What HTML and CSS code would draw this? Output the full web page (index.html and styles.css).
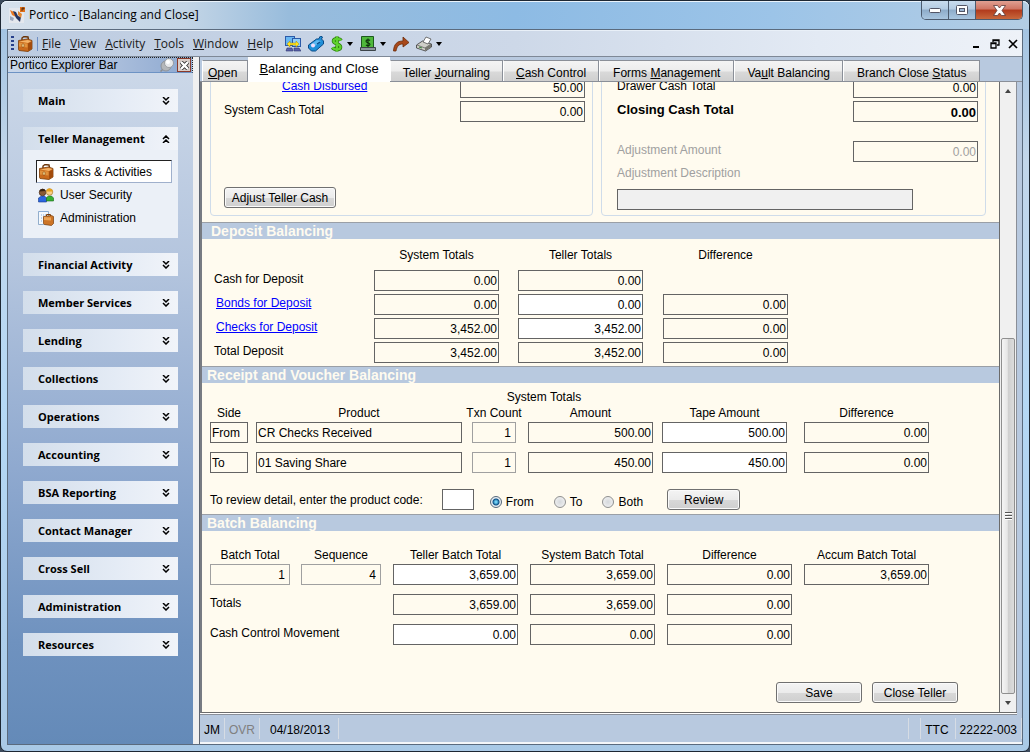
FILE: index.html
```html
<!DOCTYPE html>
<html lang="en">
  <head>
    <meta charset="UTF-8" />
    <meta name="viewport" content="width=device-width, initial-scale=1.0" />
    <title>Portico - [Balancing and Close]</title>
    <link rel="stylesheet" href="styles.css" />
  </head>
  <body>
    <!-- Shared icons -->
    <svg class="sprite" aria-hidden="true">
      <symbol id="briefcase" viewBox="0 0 16 16">
        <path d="M5 5l0-3 2-1.500 4 0.500 0.500 2.500" fill="none" stroke="#6b3408" stroke-width="1.400" />
        <path d="M1.500 4.500l9-1.500 4.500 1.500v8.500l-4 2.500-9-1-0.500-1z" fill="#c96a1c" stroke="#7a3c08" stroke-width="0.8" />
        <path d="M2 5.500l8.500-1.500 4 1-3.500 2z" fill="#f3b266" />
        <path d="M2 6.500l8.500 1v4l-8.500-1z" fill="#e2913c" />
        <path d="M11 7.500l4-2v7L11 15z" fill="#a34c0c" />
        <path d="M5 8h2v3H5z" fill="#ffe29a" stroke="#7a3c08" stroke-width="0.5" />
      </symbol>
      <symbol id="down" viewBox="0 0 8 8">
        <path d="M1 0l3 3 3-3M1 4l3 3 3-3" fill="none" stroke="#000" stroke-width="1.500" />
      </symbol>
      <symbol id="up" viewBox="0 0 8 8">
        <path d="M1 4l3-3 3 3M1 8l3-3 3 3" fill="none" stroke="#000" stroke-width="1.500" />
      </symbol>
      <symbol id="caret" viewBox="0 0 6 4">
        <path d="M0 0h6L3 4z" fill="#000" />
      </symbol>
    </svg>

    <div class="window">
      <header class="titlebar">
        <svg class="logo" viewBox="0 0 16 16" aria-hidden="true">
          <rect x="0" y="1" width="15" height="15" fill="#e4e8ee" />
          <path d="M1 3l4 2 2 5-4-2z" fill="#e87722" />
          <path d="M4 4l3 1 2 4 3 1-1 5-4-4z" fill="#26345e" />
          <path d="M9 4l4 3-1 4-3-3z" fill="#e58a34" />
          <path d="M1 9l4 2-1 3-3-1z" fill="#9aa6bd" />
          <rect x="11" y="0" width="5" height="5" fill="#e0701a" />
          <path d="M13 4V1h2v1h-2" fill="none" stroke="#4a2a10" stroke-width="0.8" />
        </svg>
        <h1>Portico - [Balancing and Close]</h1>
        <div class="window-buttons">
          <button class="minimize" aria-label="Minimize">
            <svg width="14" height="7" viewBox="0 0 14 7"><rect x="1.500" y="1.500" width="11" height="4" rx="1" fill="#fff" stroke="#535666" /></svg>
          </button>
          <button class="maximize" aria-label="Maximize">
            <svg width="12" height="10" viewBox="0 0 12 10"><rect x="0.500" y="0.500" width="11" height="9" rx="1" fill="#fff" stroke="#535666" /><rect x="3.500" y="3.500" width="5" height="3" fill="#9fb9d6" stroke="#535666" /></svg>
          </button>
          <button class="close" aria-label="Close">
            <svg width="13" height="11" viewBox="0 0 13 11"><path d="M0.500 0.500h4l2 2.500 2-2.500h4L9 5.500l3.500 5h-4l-2-2.500-2 2.500h-4L4 5.500z" fill="#fff" stroke="#5a3a3a" stroke-width="0.8" /></svg>
          </button>
        </div>
      </header>

      <div class="client">
        <nav class="menubar" aria-label="Menu">
          <span class="grip"></span>
          <svg class="tool" viewBox="0 0 16 16"><use href="#briefcase" /></svg>
          <span class="divider"></span>
          <a href="#"><u>F</u>ile</a>
          <a href="#"><u>V</u>iew</a>
          <a href="#"><u>A</u>ctivity</a>
          <a href="#"><u>T</u>ools</a>
          <a href="#"><u>W</u>indow</a>
          <a href="#"><u>H</u>elp</a>
          <div class="tools">
            <button class="tool-button" aria-label="Connections">
              <svg class="tool" viewBox="0 0 16 16">
                <rect x="0.500" y="0.500" width="9" height="9" fill="#69b7f2" stroke="#2b5aa8" />
                <rect x="7.500" y="2.500" width="8" height="8" fill="#8fcdf7" stroke="#2b5aa8" />
                <path d="M2 8l3-3v2h6V5l3 3-3 3V9H5v2z" fill="#ffe41f" stroke="#a88a00" stroke-width="0.5" />
                <path d="M2 12h5l1 3H1zM9 12h5l2 3H9z" fill="#5a62a8" stroke="#2e3570" stroke-width="0.6" />
              </svg>
            </button>
            <button class="tool-button" aria-label="Card">
              <svg class="tool" viewBox="0 0 16 16">
                <path d="M0.500 9l8-6 2 0 2-3 2 1-1 2 2 2v3l-8 7-4 0-3-3z" fill="#1f8fd8" stroke="#0b4a86" />
                <path d="M2 9l7-5 4 1-7 6z" fill="#5cb8f0" />
                <circle cx="5" cy="9.500" r="2" fill="#f0dcf8" />
                <path d="M9 8l3-2" stroke="#0b4a86" stroke-width="1.200" />
              </svg>
            </button>
            <button class="tool-button menu" aria-label="Dollar">
              <svg class="tool narrow" viewBox="0 0 12 16">
                <path d="M10 4.500C9 2.500 2.500 2 2.500 5s7 2.500 7 6S3 14 1.500 11.500M6 0.500v15" fill="none" stroke="#2c7a0c" stroke-width="3.600" />
                <path d="M10 4.500C9 2.500 2.500 2 2.500 5s7 2.500 7 6S3 14 1.500 11.500M6 0.500v15" fill="none" stroke="#5fd22c" stroke-width="2.200" />
              </svg>
              <svg class="caret" viewBox="0 0 6 4"><use href="#caret" /></svg>
            </button>
            <button class="tool-button menu" aria-label="Cash">
              <svg class="tool" viewBox="0 0 16 16">
                <path d="M1.500 0.500h12v11h-12z" fill="#4fb83b" stroke="#1d5a1d" />
                <path d="M10 4.500C9 3.500 6 3.500 6 5.200s4 1.300 4 3S7 10 6 8.800M8 2.500v8.500" fill="none" stroke="#0c300c" stroke-width="1.100" />
                <path d="M0.500 11.500h15v3h-15z" fill="#8d979d" stroke="#3c4448" />
              </svg>
              <svg class="caret" viewBox="0 0 6 4"><use href="#caret" /></svg>
            </button>
            <button class="tool-button" aria-label="Forward">
              <svg class="tool" viewBox="0 0 16 16">
                <path d="M0.500 15C1 8 4 5 10 5V1l6 5.500-6 4.500V8C6 8 4 10 3 15z" fill="#a8481a" stroke="#6b2a06" stroke-width="0.8" />
              </svg>
            </button>
            <button class="tool-button menu" aria-label="Print">
              <svg class="tool" viewBox="0 0 16 16">
                <path d="M0.500 9l6-4 9 3v3l-6 4-9-3z" fill="#cfcfc8" stroke="#3a3a3a" stroke-width="0.8" />
                <path d="M1 9l8 3 6-4" fill="none" stroke="#666" stroke-width="0.8" />
                <path d="M7 6l3-5 5 2-3 5z" fill="#fff" stroke="#555" stroke-width="0.8" />
                <path d="M3 11l3 1" stroke="#3f8a3f" stroke-width="1.200" />
                <path d="M9 12v3l6-4V8z" fill="#77776f" />
              </svg>
              <svg class="caret" viewBox="0 0 6 4"><use href="#caret" /></svg>
            </button>
          </div>
          <div class="child-buttons">
            <button aria-label="Minimize form"><svg viewBox="0 0 10 10"><path d="M1 8h6" stroke="#000" stroke-width="2" /></svg></button>
            <button aria-label="Restore form"><svg viewBox="0 0 10 10"><path d="M3 3V1h6v5H7M3 1.500h6" fill="none" stroke="#000" stroke-width="1.300" /><path d="M1 4h5v5H1zM1 4.500h5" fill="none" stroke="#000" stroke-width="1.300" /></svg></button>
            <button aria-label="Close form"><svg viewBox="0 0 10 10"><path d="M1 1l8 8M9 1L1 9" stroke="#000" stroke-width="1.700" /></svg></button>
          </div>
        </nav>

        <div class="workspace">
          <aside class="sidebar">
            <div class="sidebar-title">
              <h2>Portico Explorer Bar</h2>
              <svg class="pin" viewBox="0 0 14 14" aria-hidden="true">
                <path d="M0.500 13.500l4-4" stroke="#8c8c8c" stroke-width="1.500" />
                <circle cx="6" cy="8" r="5" fill="#b4b7ba" stroke="#85898d" stroke-width="0.8" />
                <circle cx="9" cy="5" r="4.500" fill="#e6e8ea" stroke="#8e9296" stroke-width="0.8" />
                <circle cx="8" cy="4" r="2" fill="#fff" />
              </svg>
              <button class="sidebar-close" aria-label="Close explorer bar">
                <svg viewBox="0 0 10 10"><path d="M1 1l8 8M9 1L1 9" stroke="#2c2c2c" stroke-width="4.500" /><path d="M1 1l8 8M9 1L1 9" stroke="#fff" stroke-width="2.500" /></svg>
              </button>
            </div>
            <nav class="groups" aria-label="Explorer">
              <button class="group">Main<svg viewBox="0 0 8 8"><use href="#down" /></svg></button>
              <div class="open-group">
                <button class="group">Teller Management<svg viewBox="0 0 8 8"><use href="#up" /></svg></button>
                <a class="item selected" href="#"><svg viewBox="0 0 16 16"><use href="#briefcase" /></svg>Tasks &amp; Activities</a>
                <a class="item" href="#">
                  <svg viewBox="0 0 16 16">
                    <path d="M0.500 15V11l3-2h3l2 2v4z" fill="#2b66e0" stroke="#143a8c" stroke-width="0.6" />
                    <circle cx="4.500" cy="5.500" r="3.300" fill="#8a5a34" stroke="#3d2410" stroke-width="0.6" />
                    <path d="M1.500 4.500C2 1 7 1 7.500 4z" fill="#3a2413" />
                    <path d="M8.500 14v-3.500l2-1.500h3l2 2v3z" fill="#37b034" stroke="#17681a" stroke-width="0.6" />
                    <circle cx="11.500" cy="5" r="3.300" fill="#f7cf86" stroke="#9c6a1c" stroke-width="0.6" />
                    <path d="M8.300 4.500c0-4 6-4 6.500 0z" fill="#e8a51e" />
                  </svg>User Security</a>
                <a class="item" href="#">
                  <svg viewBox="0 0 16 16">
                    <path d="M0.500 1.500h10v13h-10z" fill="#f4f8fc" stroke="#7a9cc0" stroke-width="0.8" />
                    <path d="M1 1.500h10M3 5h6M3 8h4M3 11h2" stroke="#86aede" stroke-dasharray="1 1" />
                    <path d="M8.500 6V4.500h4V6" fill="none" stroke="#7a3c08" />
                    <path d="M5.500 6.500l8-1 2 1v7l-2 2-7-1-1-1z" fill="#cc7426" stroke="#7a3c08" stroke-width="0.7" />
                    <path d="M6 7l7 0.600v3l-7-0.600z" fill="#eba457" />
                  </svg>Administration</a>
              </div>
              <button class="group">Financial Activity<svg viewBox="0 0 8 8"><use href="#down" /></svg></button>
              <button class="group">Member Services<svg viewBox="0 0 8 8"><use href="#down" /></svg></button>
              <button class="group">Lending<svg viewBox="0 0 8 8"><use href="#down" /></svg></button>
              <button class="group">Collections<svg viewBox="0 0 8 8"><use href="#down" /></svg></button>
              <button class="group">Operations<svg viewBox="0 0 8 8"><use href="#down" /></svg></button>
              <button class="group">Accounting<svg viewBox="0 0 8 8"><use href="#down" /></svg></button>
              <button class="group">BSA Reporting<svg viewBox="0 0 8 8"><use href="#down" /></svg></button>
              <button class="group">Contact Manager<svg viewBox="0 0 8 8"><use href="#down" /></svg></button>
              <button class="group">Cross Sell<svg viewBox="0 0 8 8"><use href="#down" /></svg></button>
              <button class="group">Administration<svg viewBox="0 0 8 8"><use href="#down" /></svg></button>
              <button class="group">Resources<svg viewBox="0 0 8 8"><use href="#down" /></svg></button>
            </nav>
          </aside>

          <main class="document">
            <div class="tabs">
              <button class="tab first"><span><u>O</u>pen</span></button>
              <button class="tab active"><span><u>B</u>alancing and Close</span></button>
              <button class="tab"><span>Teller <u>J</u>ournaling</span></button>
              <button class="tab"><span><u>C</u>ash Control</span></button>
              <button class="tab wide"><span>Forms <u>M</u>anagement</span></button>
              <button class="tab"><span>Va<u>u</u>lt Balancing</span></button>
              <button class="tab wide"><span>Branch Close <u>S</u>tatus</span></button>
            </div>

            <div class="pane">
              <form class="sheet">
                <div class="cash">
                  <fieldset>
                    <div class="line">
                      <a class="indent" href="#">Cash Disbursed</a>
                      <input class="money" type="text" value="50.00" aria-label="Cash Disbursed" readonly />
                    </div>
                    <div class="line">
                      <label for="systemCash">System Cash Total</label>
                      <input class="money" id="systemCash" type="text" value="0.00" readonly />
                    </div>
                    <button class="btn adjust" type="button">Adjust Teller Cash</button>
                  </fieldset>
                  <fieldset>
                    <div class="line">
                      <label for="drawerCash">Drawer Cash Total</label>
                      <input class="money" id="drawerCash" type="text" value="0.00" readonly />
                    </div>
                    <div class="line bold">
                      <label for="closingCash">Closing Cash Total</label>
                      <input class="money" id="closingCash" type="text" value="0.00" readonly />
                    </div>
                    <div class="line off">
                      <label for="adjustAmount">Adjustment Amount</label>
                      <input class="money" id="adjustAmount" type="text" value="0.00" disabled />
                    </div>
                    <div class="description">
                      <label for="adjustText">Adjustment Description</label>
                      <input id="adjustText" type="text" disabled />
                    </div>
                  </fieldset>
                </div>

                <h3 class="deposit-title">Deposit Balancing</h3>
                <table class="deposit">
                  <tr>
                    <th></th>
                    <th class="money">System Totals</th>
                    <th class="money">Teller Totals</th>
                    <th class="money">Difference</th>
                  </tr>
                  <tr>
                    <td>Cash for Deposit</td>
                    <td><input class="money" type="text" value="0.00" aria-label="Cash system total" readonly /></td>
                    <td><input class="money" type="text" value="0.00" aria-label="Cash teller total" readonly /></td>
                  </tr>
                  <tr>
                    <td><a href="#">Bonds for Deposit</a></td>
                    <td><input class="money" type="text" value="0.00" aria-label="Bonds system total" readonly /></td>
                    <td><input class="money edit" type="text" value="0.00" aria-label="Bonds teller total" /></td>
                    <td><input class="money" type="text" value="0.00" aria-label="Bonds difference" readonly /></td>
                  </tr>
                  <tr>
                    <td><a href="#">Checks for Deposit</a></td>
                    <td><input class="money" type="text" value="3,452.00" aria-label="Checks system total" readonly /></td>
                    <td><input class="money edit" type="text" value="3,452.00" aria-label="Checks teller total" /></td>
                    <td><input class="money" type="text" value="0.00" aria-label="Checks difference" readonly /></td>
                  </tr>
                  <tr>
                    <td>Total Deposit</td>
                    <td><input class="money" type="text" value="3,452.00" aria-label="Deposit system total" readonly /></td>
                    <td><input class="money" type="text" value="3,452.00" aria-label="Deposit teller total" readonly /></td>
                    <td><input class="money" type="text" value="0.00" aria-label="Deposit difference" readonly /></td>
                  </tr>
                </table>

                <h3>Receipt and Voucher Balancing</h3>
                <table class="receipt">
                  <tr>
                    <th class="over">System Totals</th>
                  </tr>
                  <tr>
                    <th class="side">Side</th>
                    <th class="product">Product</th>
                    <th class="count">Txn Count</th>
                    <th class="money">Amount</th>
                    <th class="money">Tape Amount</th>
                    <th class="money">Difference</th>
                  </tr>
                  <tr>
                    <td><input class="side" type="text" value="From" aria-label="Side" readonly /></td>
                    <td><input class="product" type="text" value="CR Checks Received" aria-label="Product" readonly /></td>
                    <td><input class="count" type="text" value="1" aria-label="Txn Count" readonly /></td>
                    <td><input class="money" type="text" value="500.00" aria-label="Amount" readonly /></td>
                    <td><input class="money edit" type="text" value="500.00" aria-label="Tape Amount" /></td>
                    <td><input class="money" type="text" value="0.00" aria-label="Difference" readonly /></td>
                  </tr>
                  <tr>
                    <td><input class="side" type="text" value="To" aria-label="Side" readonly /></td>
                    <td><input class="product" type="text" value="01 Saving Share" aria-label="Product" readonly /></td>
                    <td><input class="count" type="text" value="1" aria-label="Txn Count" readonly /></td>
                    <td><input class="money" type="text" value="450.00" aria-label="Amount" readonly /></td>
                    <td><input class="money edit" type="text" value="450.00" aria-label="Tape Amount" /></td>
                    <td><input class="money" type="text" value="0.00" aria-label="Difference" readonly /></td>
                  </tr>
                </table>
                <div class="review">
                  <label for="productCode">To review detail, enter the product code:</label>
                  <input class="code edit" id="productCode" type="text" />
                  <div class="radios">
                    <label><input type="radio" name="side" checked />From</label>
                    <label><input type="radio" name="side" />To</label>
                    <label><input type="radio" name="side" />Both</label>
                  </div>
                  <button class="btn" type="button">Review</button>
                </div>

                <h3>Batch Balancing</h3>
                <table class="batch">
                  <tr>
                    <th class="number">Batch Total</th>
                    <th class="number">Sequence</th>
                    <th class="money">Teller Batch Total</th>
                    <th class="money">System Batch Total</th>
                    <th class="money">Difference</th>
                    <th class="money">Accum Batch Total</th>
                  </tr>
                  <tr>
                    <td><input class="number" type="text" value="1" aria-label="Batch Total" readonly /></td>
                    <td><input class="number" type="text" value="4" aria-label="Sequence" readonly /></td>
                    <td><input class="money edit" type="text" value="3,659.00" aria-label="Teller Batch Total" /></td>
                    <td><input class="money" type="text" value="3,659.00" aria-label="System Batch Total" readonly /></td>
                    <td><input class="money" type="text" value="0.00" aria-label="Batch difference" readonly /></td>
                    <td><input class="money" type="text" value="3,659.00" aria-label="Accum Batch Total" readonly /></td>
                  </tr>
                  <tr>
                    <td class="label">Totals</td>
                    <td><input class="money" type="text" value="3,659.00" aria-label="Totals teller" readonly /></td>
                    <td><input class="money" type="text" value="3,659.00" aria-label="Totals system" readonly /></td>
                    <td><input class="money" type="text" value="0.00" aria-label="Totals difference" readonly /></td>
                  </tr>
                  <tr>
                    <td class="label">Cash Control Movement</td>
                    <td><input class="money edit" type="text" value="0.00" aria-label="Movement teller" /></td>
                    <td><input class="money" type="text" value="0.00" aria-label="Movement system" readonly /></td>
                    <td><input class="money" type="text" value="0.00" aria-label="Movement difference" readonly /></td>
                  </tr>
                </table>

                <div class="actions">
                  <button class="btn" type="button">Save</button>
                  <button class="btn" type="button">Close Teller</button>
                </div>
              </form>

              <div class="scrollbar" aria-hidden="true">
                <svg class="arrow" viewBox="0 0 6 4"><path d="M0 4h6L3 0z" fill="#444" /></svg>
                <div class="track">
                  <div class="thumb"><span class="ridges"></span></div>
                </div>
                <svg class="arrow" viewBox="0 0 6 4"><path d="M0 0h6L3 4z" fill="#444" /></svg>
              </div>
            </div>

            <footer class="status">
              <span>JM</span>
              <span class="ovr">OVR</span>
              <span class="date">04/18/2013</span>
              <span class="blank"></span>
              <span class="branch">TTC</span>
              <span>22222-003</span>
            </footer>
          </main>
        </div>
      </div>
    </div>
  </body>
</html>
```

FILE: styles.css
```css
* {
  box-sizing: border-box;
}
body {
  margin: 0;
  background: #3b4a5c;
  color: #000;
  font-family: "Liberation Sans", Arial, sans-serif;
  font-size: 12px;
  line-height: 16px;
}
h1,
h2,
h3 {
  margin: 0;
  font-weight: normal;
}
button,
input {
  font: inherit;
  color: inherit;
  margin: 0;
  padding: 0;
}
button {
  border: none;
  background: none;
}
svg {
  display: block;
  flex: none;
}
.sprite {
  display: none;
}

/* Window frame */
.window {
  display: flex;
  flex-direction: column;
  height: 100vh;
  padding: 0 6px 6px;
  border: 1px solid #1d2733;
  border-radius: 7px;
  background: linear-gradient(#cfe0f0, #a4c4e2 28px, #c2d6ea 160px, #b5d8f5 400px, #a9c9e6);
}
.titlebar {
  display: flex;
  align-items: center;
  height: 28px;
  flex: none;
  margin: 0 -6px;
  padding-left: 8px;
  border-radius: 6px 6px 0 0;
  background: linear-gradient(90deg, #d6e1ec, #c3d5e6 18%, #98bcdc 28%, #8dbbe4 50%, #9cc4e8 75%, #b3cde4);
  box-shadow: inset 0 1px #eaf3fb;
}
.logo {
  width: 16px;
  height: 16px;
  margin-right: 4px;
}
.titlebar h1 {
  font-family: "Open Sans", "Noto Sans", sans-serif;
  font-size: 12px;
}
.window-buttons {
  display: flex;
  align-self: flex-start;
  height: 19px;
  margin-left: auto;
  margin-right: 6px;
  border: 1px solid #4c5b6e;
  border-top: none;
  border-radius: 0 0 5px 5px;
  overflow: hidden;
}
.window-buttons button {
  display: grid;
  place-items: center;
  width: 27px;
  background: linear-gradient(#c9dced, #b3cbe2 45%, #8eacc9 50%, #a9c6e0);
  border-right: 1px solid #4c5b6e;
}
.window-buttons .close {
  width: 46px;
  border-right: none;
  background: linear-gradient(#e0a092, #cf7463 45%, #b13a1c 50%, #c8683c);
}

.client {
  display: flex;
  flex-direction: column;
  flex: 1;
  min-height: 0;
  border: 1px solid #5b6b7e;
}

/* Menu and toolbar */
.menubar {
  display: flex;
  align-items: center;
  gap: 9px;
  height: 27px;
  flex: none;
  padding: 0 4px 0 3px;
  border-top: 1px solid #e9f0f8;
  border-bottom: 1px solid #7e8896;
  background: linear-gradient(90deg, #bdcce1, #cdd8e8 50%, #e3eaf4 80%, #eef2f8);
  font-family: "Open Sans", "Noto Sans", sans-serif;
  font-size: 12px;
}
.menubar a {
  color: #1a1a1a;
  text-decoration: none;
}
.grip {
  width: 3px;
  height: 16px;
  margin-right: -6px;
  background: repeating-linear-gradient(#27408b 0 2px, transparent 2px 4px);
}
.tool {
  width: 16px;
  height: 16px;
}
.narrow {
  width: 12px;
}
.divider {
  width: 1px;
  height: 14px;
  margin: 0 -5px;
  background: #6f8fc4;
}
.tools {
  display: flex;
  gap: 7px;
  margin-left: 3px;
}
.tool-button {
  display: flex;
  align-items: center;
  gap: 4px;
}
.caret {
  width: 6px;
  height: 4px;
}
.child-buttons {
  display: flex;
  gap: 8px;
  margin-left: auto;
}
.child-buttons svg {
  width: 10px;
  height: 10px;
}

.workspace {
  display: flex;
  flex: 1;
  min-height: 0;
}

/* Explorer bar */
.sidebar {
  display: flex;
  flex-direction: column;
  width: 191px;
  flex: none;
  border-right: 6px solid #f0f0f0;
  background: linear-gradient(#cdd9e9, #b4c5de 30%, #8fa9cf 60%, #6f92bf 85%, #648ab8);
}
.sidebar-title {
  display: flex;
  align-items: center;
  height: 16px;
  padding: 0 1px 0 2px;
  border: 1px dotted #222;
  border-left: none;
  border-bottom: 1px solid #6d93c4;
  background: linear-gradient(90deg, #c9d7ea, #a9bddb 60%, #8ca8d0);
}
.sidebar-title h2 {
  flex: 1;
  font-size: 12px;
  line-height: 14px;
}
.pin {
  width: 14px;
  height: 14px;
  margin-right: 3px;
}
.sidebar-close {
  display: grid;
  place-items: center;
  width: 14px;
  height: 14px;
  border: 1px solid #8a3a2a;
  background: #d9cdc8;
}
.sidebar-close svg {
  width: 9px;
  height: 9px;
}
.groups {
  display: flex;
  flex-direction: column;
  gap: 15px;
  padding: 16px 15px;
}
.group {
  display: flex;
  align-items: center;
  justify-content: space-between;
  width: 100%;
  height: 23px;
  flex: none;
  padding: 0 8px 0 15px;
  background: linear-gradient(90deg, #d3deeb, #e4ebf5 60%, #f1f4f9);
  font-family: "Open Sans", "Noto Sans", sans-serif;
  font-size: 11px;
  font-weight: bold;
}
.group svg {
  width: 8px;
  height: 8px;
}
.open-group {
  padding-bottom: 9px;
  background: #ebf0f7;
}
.item {
  display: flex;
  align-items: center;
  gap: 6px;
  height: 23px;
  margin: 0 6px 0 13px;
  padding-left: 1px;
  border: 1px solid transparent;
  color: #000;
  text-decoration: none;
}
.item svg {
  width: 16px;
  height: 16px;
}
.selected {
  margin-top: 10px;
  border-color: #222 #9fb0cc #9fb0cc #222;
  background: #fff;
}

/* Tabs */
.document {
  display: flex;
  flex-direction: column;
  flex: 1;
  min-width: 0;
  border-left: 1px solid #5d6470;
  background: #b8c9df;
}
.tabs {
  display: flex;
  align-items: flex-end;
  height: 25px;
  flex: none;
  padding-left: 2px;
  border-bottom: 1px solid #8a8f98;
}
.tab {
  height: 21px;
  padding: 3px 12px 0;
  border: 1px solid #8a8f98;
  border-bottom: none;
  border-left-color: #fff;
  background: linear-gradient(#f4f4f4, #ececec 50%, #d9d9d9 55%, #cfcfcf);
  white-space: nowrap;
}
.tab.wide {
  padding: 3px 13px 0;
}
.tab.first {
  padding: 3px 10px 0 5px;
}
.tab.active {
  height: 25px;
  margin-bottom: -1px;
  padding: 0 10px 2px;
  border-color: #fff;
  background: #fff;
  font-size: 13px;
}

/* Scrolling sheet */
.pane {
  display: flex;
  flex: 1;
  min-height: 0;
  margin-right: 5px;
  border-left: 2px solid #777b82;
  border-bottom: 1px solid #6b6b6b;
  box-shadow: 0 1px #fff, 0 2px #8a8f98;
  background: #fffbef;
  overflow: hidden;
}
.sheet {
  display: flex;
  flex-direction: column;
  flex: 1;
  min-width: 0;
  margin-top: -15px;
}
.cash {
  display: flex;
  gap: 8px;
  padding: 0 13px 6px 8px;
}
fieldset {
  display: flex;
  flex-direction: column;
  gap: 3px;
  flex: 1;
  min-width: 0;
  margin: 0;
  padding: 9px 7px 5px 15px;
  border: 1px solid #cfdcea;
  border-radius: 4px;
}
fieldset:first-child {
  padding-left: 13px;
  padding-bottom: 7px;
}
.line {
  display: flex;
  justify-content: space-between;
  line-height: 18px;
}
a {
  color: #0000ff;
}
.indent {
  margin-left: 58px;
}
.bold {
  font-size: 13px;
  font-weight: bold;
}
.off,
.description label {
  color: #a0a0a0;
}
.off {
  margin-top: 16px;
}
.description {
  display: flex;
  flex-direction: column;
  align-items: flex-start;
  gap: 8px;
}
.description input {
  width: 296px;
  max-width: 100%;
}
.adjust {
  width: 112px;
  margin-top: auto;
}

input[type="text"] {
  height: 21px;
  padding: 1px 1px 0;
  border: 1px solid #646464;
  border-radius: 0;
  background: #fffbef;
}
input.edit[type="text"] {
  background: #fff;
}
.description input[type="text"] {
  background: #f0f0f0;
}
.money {
  width: 125px;
}
.side {
  width: 38px;
}
.product {
  width: 206px;
}
.count {
  width: 44px;
}
.number {
  width: 80px;
}
input.money[type="text"] {
  text-align: right;
}
input.count[type="text"],
input.number[type="text"] {
  text-align: right;
  padding-right: 4px;
  border-color: #a0a0a0;
}
.btn {
  height: 21px;
  border: 1px solid #707070;
  border-radius: 3px;
  background: linear-gradient(#f4f4f4, #ebebeb 50%, #d8d8d8 52%, #cfcfcf);
  box-shadow: inset 0 0 0 1px #fafafa;
}

h3 {
  height: 17px;
  flex: none;
  padding-left: 5px;
  border-top: 1px solid #9a9fa6;
  background: #b8c9df;
  color: #fffbef;
  font-size: 14px;
  font-weight: bold;
}
.deposit-title {
  padding-left: 9px;
}

/* Balancing tables */
table,
tbody {
  display: block;
}
tr {
  display: grid;
}
th,
td {
  padding: 0;
  white-space: nowrap;
}
th {
  display: flex;
  justify-content: center;
  font-weight: normal;
}
td {
  line-height: 18px;
}
td input {
  display: block;
}
.deposit {
  padding: 8px 0 0 12px;
}
.deposit tr {
  grid-template-columns: 160px 144px 145px 125px;
  margin-bottom: 3px;
}
.deposit tr:first-child {
  margin-bottom: 7px;
}
.deposit td a {
  margin-left: 2px;
}
.receipt {
  padding: 6px 0 0 8px;
}
.receipt tr {
  grid-template-columns: 46px 216px 56px 134px 142px 125px;
  margin-bottom: 9px;
}
.receipt tr:first-child {
  margin-bottom: 0;
}
.receipt tr:nth-child(2),
.batch tr:first-child {
  margin-bottom: 1px;
}
.over {
  grid-column: 3 / 5;
  width: 144px;
}
.batch {
  padding: 16px 0 0 8px;
}
.batch tr {
  grid-template-columns: 91px 92px 137px 137px 137px 125px;
  margin-bottom: 9px;
}
.label {
  grid-column: span 2;
}

.review {
  display: flex;
  align-items: center;
  padding: 7px 0 4px 8px;
}
.code {
  width: 32px;
  margin: 0 16px 0 19px;
}
.radios {
  display: flex;
  gap: 20px;
  padding-top: 5px;
}
.radios label {
  display: flex;
  align-items: center;
  gap: 4px;
}
.radios input {
  appearance: none;
  width: 12px;
  height: 12px;
  border: 1px solid #8e8f8f;
  border-radius: 50%;
  background: radial-gradient(#d5d8dc, #f6f6f6);
}
.radios input:checked {
  border-color: #55677a;
  background: radial-gradient(circle, #6fd0f5 0 1px, #0b4f86 3px, #e8eef3 4px);
}
.review .btn {
  width: 73px;
  margin-left: 24px;
}
.actions {
  display: flex;
  justify-content: flex-end;
  gap: 10px;
  margin-top: auto;
  padding: 0 41px 9px 0;
}
.actions .btn {
  width: 86px;
}

/* Scrollbar */
.scrollbar {
  display: flex;
  flex-direction: column;
  align-items: center;
  width: 18px;
  flex: none;
  border-left: 1px solid #6b6b6b;
  border-right: 1px solid #8a8f98;
  background: #f0f0f0;
}
.arrow {
  width: 6px;
  height: 4px;
  margin: 7px 0;
}
.track {
  display: flex;
  flex-direction: column;
  justify-content: flex-end;
  flex: 1;
  width: 100%;
  padding: 0 1px;
}
.thumb {
  display: grid;
  place-items: center;
  height: 60%;
  border: 1px solid #8f8f8f;
  border-radius: 2px;
  background: linear-gradient(90deg, #f5f5f5, #e6e6e6 45%, #cfcfcf 50%, #dcdcdc);
}
.ridges {
  width: 7px;
  height: 8px;
  background: repeating-linear-gradient(#555 0 1px, #fff 1px 2px, transparent 2px 3px);
}

/* Status bar */
.status {
  display: flex;
  align-items: center;
  height: 29px;
  flex: none;
  margin-top: 2px;
  border-bottom: 2px solid #f4f6f9;
}
.status span {
  height: 21px;
  padding: 4px 4px 0;
  border-right: 1px solid #d6dce4;
}
.status .ovr {
  color: #808080;
}
.status .date {
  padding: 4px 8px 0 10px;
}
.status .blank {
  width: 13px;
  margin-left: auto;
  border-left: 1px solid #d6dce4;
}
.status .branch {
  padding-right: 6px;
}
```
